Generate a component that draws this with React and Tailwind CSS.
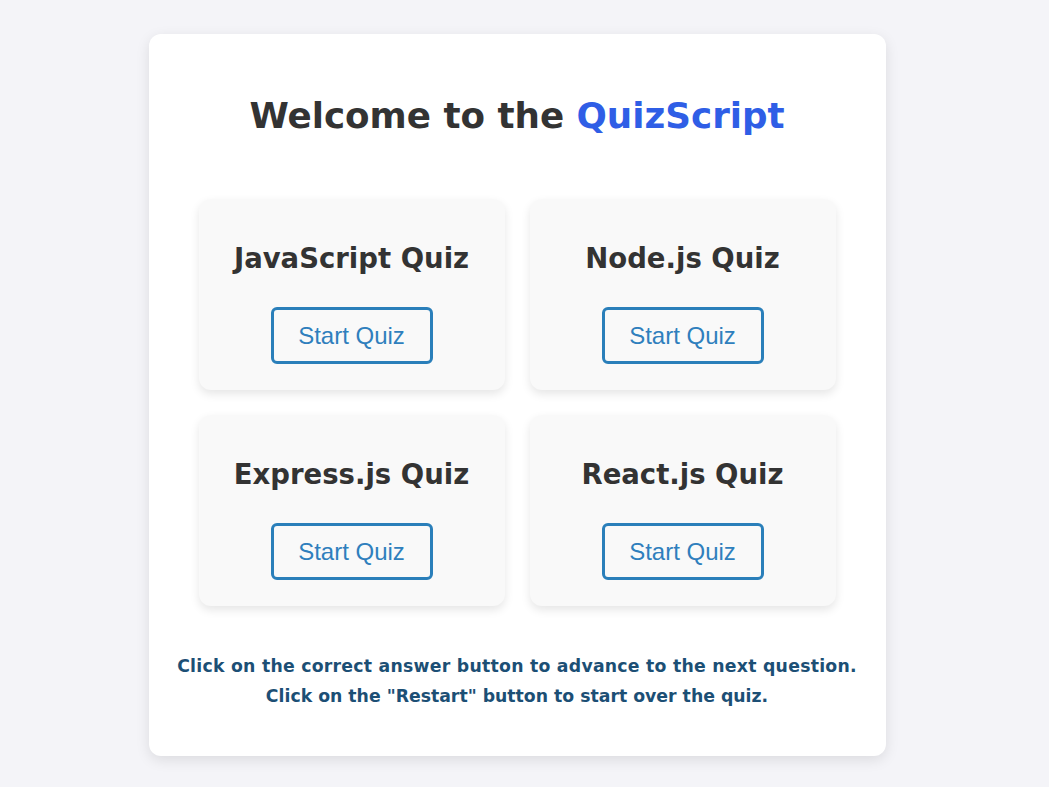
export default function App() {
  const quizzes = ["JavaScript Quiz", "Node.js Quiz", "Express.js Quiz", "React.js Quiz"];
  return (
    <div className="min-h-screen w-full bg-[#f4f4f8] flex justify-center pt-[34px] pr-[15px]" style={{ fontFamily: '"DejaVu Sans", sans-serif' }}>
      <div className="w-[737px] h-[722px] bg-white rounded-xl shadow-[0_4px_14px_rgba(0,0,0,0.1)] px-[50px] pt-[50px] pb-[44px] flex flex-col">
        <h1 className="text-center text-[35.7px] leading-[64px] font-semibold text-[#333333]">
          Welcome to the <span className="text-[#2f5ee6]">QuizScript</span>
        </h1>
        <div className="mt-[51px] grid grid-cols-2 gap-[25px]">
          {quizzes.map((q) => (
            <div key={q} className="h-[191px] bg-[#f9f9f9] rounded-xl shadow-[0_4px_10px_rgba(0,0,0,0.1)] flex flex-col items-center pt-[37px]">
              <h2 className="text-[27.5px] leading-[44px] font-semibold text-[#333333]">{q}</h2>
              <button className="mt-[27px] w-[162px] h-[57px] border-[3px] border-[#2a7fba] rounded-[6px] text-[24px] text-[#2f7fbd] bg-transparent" style={{ fontFamily: '"Liberation Sans", Arial, sans-serif' }}>
                Start Quiz
              </button>
            </div>
          ))}
        </div>
        <p className="mt-[45px] -mx-[30px] whitespace-nowrap text-center text-[17.3px] leading-[30px] font-semibold text-[#1c4f75]">
          <span className="tracking-[0.25px]">Click on the correct answer button to advance to the next question.</span>
          <br />
          Click on the "Restart" button to start over the quiz.
        </p>
      </div>
    </div>
  );
}
